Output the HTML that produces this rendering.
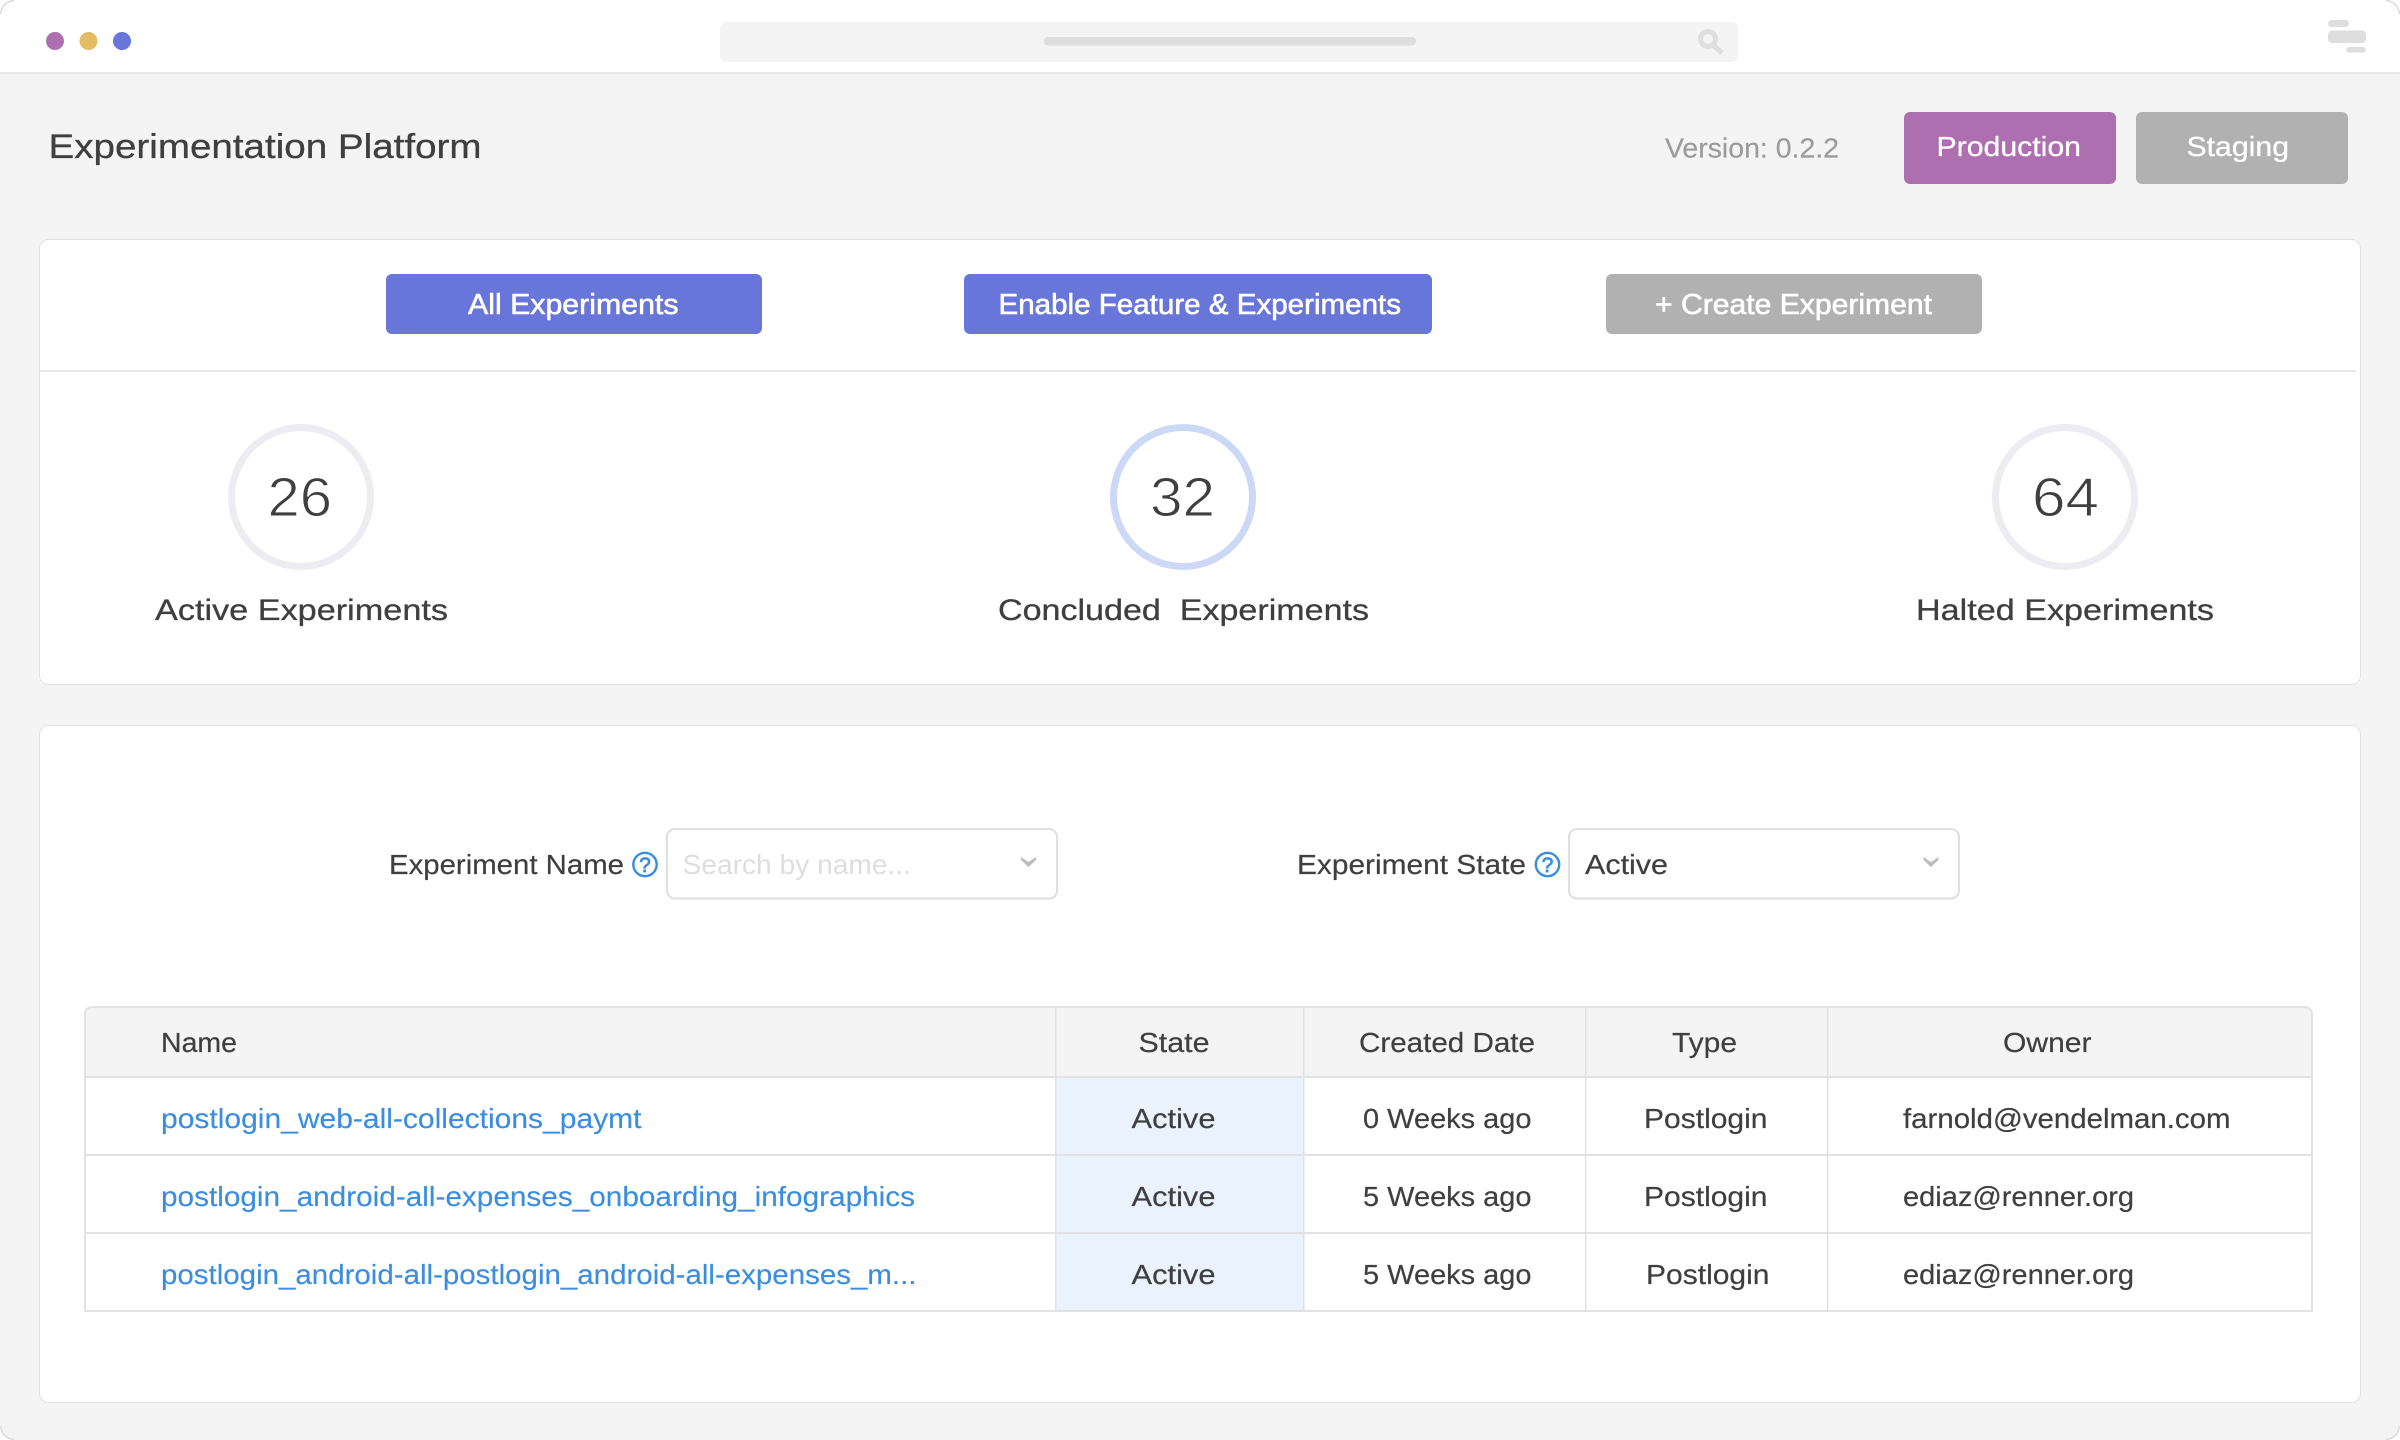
<!DOCTYPE html>
<html lang="en">
<head>
<meta charset="utf-8">
<title>Experimentation Platform</title>
<style>
html,body{margin:0;padding:0;background:#fff;width:2400px;height:1440px;overflow:hidden}
svg{display:block}
text{font-family:"Liberation Sans",Arial,sans-serif;white-space:pre;fill:#3f3f3f}
.t{font-size:27.5px;stroke:#3f3f3f;stroke-width:.2px}
.title{font-size:34.5px;stroke:#3f3f3f;stroke-width:.3px}
.btn{font-size:28.5px;fill:#fff;stroke:#fff;stroke-width:.6px}
.env{font-size:28px;fill:#fff;stroke:#fff;stroke-width:.3px}
.num{font-size:55px;stroke:#fff;stroke-width:1px}
.lab{font-size:30px;stroke:#3f3f3f;stroke-width:.3px}
.link{font-size:27.5px;fill:#3b8de0;stroke:#3b8de0;stroke-width:.15px}
.q{font-size:21px;fill:#3b8de0;stroke:#3b8de0;stroke-width:.8px;text-anchor:middle}
.line{fill:#e2e2e2}
</style>
</head>
<body>
<svg xmlns="http://www.w3.org/2000/svg" width="2400" height="1440" viewBox="0 0 2400 1440">
  <rect x="0" y="0" width="2400" height="1440" fill="#fff"/>
  <rect x="0" y="0" width="2400" height="1440" rx="15" fill="#f4f4f4"/>
  <path d="M0 72V15A15 15 0 0 1 15 0H2385A15 15 0 0 1 2400 15V72Z" fill="#fff"/>
  <g fill="none" stroke="#dcdcdc" stroke-width="1.5">
    <path d="M.7 14A13.500 13.500 0 0 1 14 .7"/>
    <path d="M2386 .7A13.500 13.500 0 0 1 2399.300 14"/>
    <path d="M.7 1426A13.500 13.500 0 0 0 14 1439.300"/>
    <path d="M2386 1439.300A13.500 13.500 0 0 0 2399.300 1426"/>
  </g>
  <rect x="0" y="72" width="2400" height="2" fill="#e8e8e8"/>

  <circle cx="55" cy="41" r="9" fill="#ad6fb0"/>
  <circle cx="88.500" cy="41" r="9" fill="#e4bc62"/>
  <circle cx="122" cy="41" r="9" fill="#6876d9"/>

  <rect x="720" y="22" width="1018" height="40" rx="6" fill="#f4f4f4"/>
  <rect x="1044" y="37" width="372" height="8.500" rx="4" fill="#dedede"/>
  <circle cx="1708" cy="39" r="7.500" fill="none" stroke="#dedede" stroke-width="5"/>
  <path d="M1713 45L1722 53" stroke="#dedede" stroke-width="5"/>

  <rect x="2328" y="20" width="21" height="7" rx="3.500" fill="#dedede"/>
  <rect x="2328" y="30.500" width="38" height="12.500" rx="4" fill="#dedede"/>
  <rect x="2346" y="47" width="20" height="5.500" rx="2.700" fill="#dedede"/>

  <text x="48.500" y="158" class="title" textLength="433" lengthAdjust="spacingAndGlyphs">Experimentation Platform</text>
  <text x="1665" y="157.500" class="t" textLength="174" lengthAdjust="spacingAndGlyphs" style="fill:#9b9b9b;stroke:#9b9b9b">Version: 0.2.2</text>
  <rect x="1904" y="112" width="212" height="72" rx="6" fill="#ad6fb0"/>
  <text x="1936.500" y="156" class="env" textLength="144.500" lengthAdjust="spacingAndGlyphs">Production</text>
  <rect x="2136" y="112" width="212" height="72" rx="6" fill="#b1b1b1"/>
  <text x="2186.500" y="156" class="env" textLength="102.500" lengthAdjust="spacingAndGlyphs">Staging</text>

  <!-- Summary card -->
  <rect x="39.500" y="239.500" width="2321" height="445" rx="9" fill="#fff" stroke="#e2e2e2"/>
  <rect x="386" y="274" width="376" height="60" rx="6" fill="#6876d9"/>
  <text x="468" y="314" class="btn" textLength="210.500" lengthAdjust="spacingAndGlyphs">All Experiments</text>
  <rect x="964" y="274" width="468" height="60" rx="6" fill="#6876d9"/>
  <text x="998.500" y="314" class="btn" textLength="402.500" lengthAdjust="spacingAndGlyphs">Enable Feature &amp; Experiments</text>
  <rect x="1606" y="274" width="376" height="60" rx="6" fill="#b1b1b1"/>
  <text x="1655" y="314" class="btn" textLength="277" lengthAdjust="spacingAndGlyphs">+ Create Experiment</text>
  <rect x="40" y="370" width="2316" height="2" fill="#e8e8e8"/>

  <circle cx="301" cy="497" r="69.500" fill="none" stroke="#edecf3" stroke-width="7"/>
  <text x="267.500" y="516" class="num" textLength="64.500" lengthAdjust="spacingAndGlyphs">26</text>
  <text x="155" y="620" class="lab" textLength="293" lengthAdjust="spacingAndGlyphs">Active Experiments</text>

  <circle cx="1183" cy="497" r="69.500" fill="none" stroke="#cbd8f6" stroke-width="7"/>
  <text x="1150" y="516" class="num" textLength="65" lengthAdjust="spacingAndGlyphs">32</text>
  <text x="998" y="620" class="lab" textLength="371" lengthAdjust="spacingAndGlyphs" xml:space="preserve">Concluded  Experiments</text>

  <circle cx="2065" cy="497" r="69.500" fill="none" stroke="#edecf3" stroke-width="7"/>
  <text x="2032" y="516" class="num" textLength="67" lengthAdjust="spacingAndGlyphs">64</text>
  <text x="1916" y="620" class="lab" textLength="298" lengthAdjust="spacingAndGlyphs">Halted Experiments</text>

  <!-- Filter and table card -->
  <rect x="39.500" y="725.500" width="2321" height="677" rx="9" fill="#fff" stroke="#e2e2e2"/>

  <text x="389" y="874" class="t" textLength="235" lengthAdjust="spacingAndGlyphs">Experiment Name</text>
  <circle cx="645" cy="864.500" r="11.700" fill="none" stroke="#3b8de0" stroke-width="2.400"/>
  <text x="645" y="872" class="q">?</text>
  <rect x="667" y="829" width="390" height="69.500" rx="8" fill="#fff" stroke="#dedede" stroke-width="2"/>
  <text x="682.500" y="874" class="t" textLength="228.500" lengthAdjust="spacingAndGlyphs" style="fill:#dedede;stroke:none">Search by name...</text>
  <path d="M1021 857L1028.500 862L1036 857V860L1028.500 867L1021 860Z" fill="#bdbdbd"/>

  <text x="1297" y="874" class="t" textLength="229" lengthAdjust="spacingAndGlyphs">Experiment State</text>
  <circle cx="1547.500" cy="864.500" r="11.700" fill="none" stroke="#3b8de0" stroke-width="2.400"/>
  <text x="1547.500" y="872" class="q">?</text>
  <rect x="1569" y="829" width="390" height="69.500" rx="8" fill="#fff" stroke="#dedede" stroke-width="2"/>
  <text x="1585" y="874" class="t" textLength="83" lengthAdjust="spacingAndGlyphs">Active</text>
  <path d="M1923.500 857L1931 862L1938.500 857V860L1931 867L1923.500 860Z" fill="#bdbdbd"/>

  <!-- Table -->
  <path d="M84 1078V1014A8 8 0 0 1 92 1006H2305A8 8 0 0 1 2313 1014V1078Z" fill="#f4f4f4"/>
  <rect x="1056" y="1078" width="248" height="233" fill="#eaf3fd"/>
  <path d="M85 1078V1014A7 7 0 0 1 92 1007H2305A7 7 0 0 1 2312 1014V1311H85Z" fill="none" stroke="#e2e2e2" stroke-width="2"/>
  <rect x="84" y="1076" width="2229" height="2" class="line"/>
  <rect x="84" y="1154" width="2229" height="2" class="line"/>
  <rect x="84" y="1232" width="2229" height="2" class="line"/>
  <rect x="84" y="1310" width="2229" height="2" class="line"/>
  <rect x="1055" y="1006" width="1.500" height="306" class="line"/>
  <rect x="1303" y="1006" width="1.500" height="306" class="line"/>
  <rect x="1585" y="1006" width="1.500" height="306" class="line"/>
  <rect x="1827" y="1006" width="1.500" height="306" class="line"/>

  <text x="161" y="1052" class="t" textLength="76" lengthAdjust="spacingAndGlyphs">Name</text>
  <text x="1138.500" y="1052" class="t" textLength="71" lengthAdjust="spacingAndGlyphs">State</text>
  <text x="1359" y="1052" class="t" textLength="176" lengthAdjust="spacingAndGlyphs">Created Date</text>
  <text x="1672" y="1052" class="t" textLength="65" lengthAdjust="spacingAndGlyphs">Type</text>
  <text x="2003" y="1052" class="t" textLength="88.500" lengthAdjust="spacingAndGlyphs">Owner</text>

  <text x="161" y="1128" class="link" textLength="480.500" lengthAdjust="spacingAndGlyphs">postlogin_web-all-collections_paymt</text>
  <text x="1131.500" y="1128" class="t" textLength="84" lengthAdjust="spacingAndGlyphs">Active</text>
  <text x="1363" y="1128" class="t" textLength="168.500" lengthAdjust="spacingAndGlyphs">0 Weeks ago</text>
  <text x="1644" y="1128" class="t" textLength="123.500" lengthAdjust="spacingAndGlyphs">Postlogin</text>
  <text x="1903" y="1128" class="t" textLength="327.500" lengthAdjust="spacingAndGlyphs">farnold@vendelman.com</text>

  <text x="161" y="1206" class="link" textLength="754" lengthAdjust="spacingAndGlyphs">postlogin_android-all-expenses_onboarding_infographics</text>
  <text x="1131.500" y="1206" class="t" textLength="84" lengthAdjust="spacingAndGlyphs">Active</text>
  <text x="1363" y="1206" class="t" textLength="168.500" lengthAdjust="spacingAndGlyphs">5 Weeks ago</text>
  <text x="1644" y="1206" class="t" textLength="123.500" lengthAdjust="spacingAndGlyphs">Postlogin</text>
  <text x="1903" y="1206" class="t" textLength="231" lengthAdjust="spacingAndGlyphs">ediaz@renner.org</text>

  <text x="161" y="1284" class="link" textLength="755.500" lengthAdjust="spacingAndGlyphs">postlogin_android-all-postlogin_android-all-expenses_m...</text>
  <text x="1131.500" y="1284" class="t" textLength="84" lengthAdjust="spacingAndGlyphs">Active</text>
  <text x="1363" y="1284" class="t" textLength="168.500" lengthAdjust="spacingAndGlyphs">5 Weeks ago</text>
  <text x="1646" y="1284" class="t" textLength="123.500" lengthAdjust="spacingAndGlyphs">Postlogin</text>
  <text x="1903" y="1284" class="t" textLength="231" lengthAdjust="spacingAndGlyphs">ediaz@renner.org</text>
</svg>
</body>
</html>
